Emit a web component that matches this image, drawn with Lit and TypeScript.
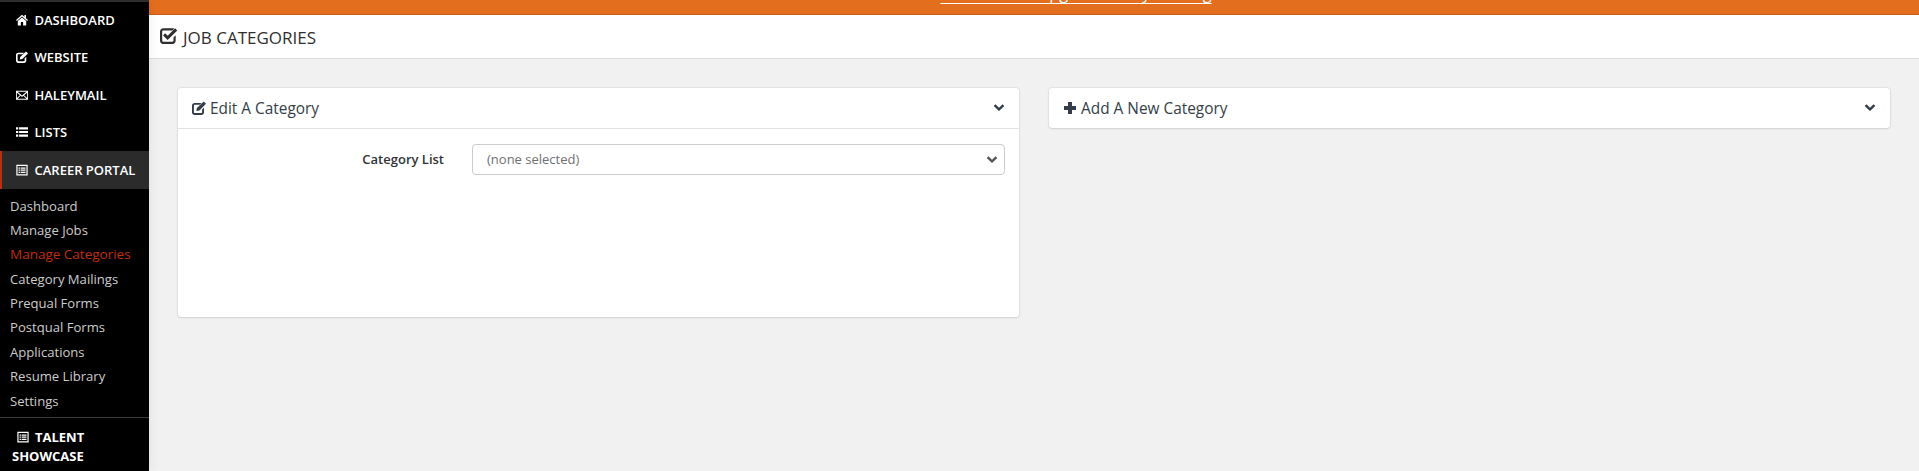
import { LitElement, html, css, svg } from "lit";
import { customElement } from "lit/decorators.js";

const icons: Record<string, unknown> = {
  home: svg`<path d="M7 .9 0 7l1 1.100L7 2.900l6 5.200L14 7l-2.400-2.100V1.300H9.800V3.300Z"/><path d="M7 4.100 2.100 8.300v5h3.600V9.400h2.600v3.900h3.600v-5Z"/>`,
  edit: svg`<path d="M2.600 1.900h7L7.700 3.800H3c-.6 0-1.100.5-1.100 1.100v6c0 .6.500 1.100 1.100 1.100h6c.6 0 1.100-.5 1.100-1.100V8.500L12 6.600v4.900c0 1.400-1.200 2.500-2.600 2.500H2.600C1.200 14 0 12.900 0 11.500V4.400C0 3 1.200 1.900 2.600 1.900Z"/><path d="M11.700.5 14 2.800 7.400 9.400 4.300 10l.6-3.100Z"/>`,
  mail: svg`<path fill-rule="evenodd" d="M0 2h14v10.500H0ZM1.800 3.100 7 7.500l5.200-4.400ZM1 4.300v6.200L4.600 7.300ZM13 4.300 9.400 7.300l3.600 3.200ZM5.400 8 1.900 11.400h10.200L8.600 8 7 9.300Z"/>`,
  list: svg`<path d="M0 1.500h2.600v2.600H0ZM3.600 1.500H14v2.600H3.600ZM0 5.700h2.600v2.600H0ZM3.600 5.700H14v2.600H3.600ZM0 9.900h2.600v2.600H0ZM3.600 9.900H14v2.600H3.600Z"/>`,
  listalt: svg`<path fill-rule="evenodd" d="M.4 1h13.200v12.400H.4ZM1.800 2.400v9.600h10.400V2.400Z"/><path d="M3 4h1.600v1.400H3ZM5.400 4h5.700v1.400H5.400ZM3 6.500h1.600v1.400H3ZM5.400 6.500h5.700v1.400H5.400ZM3 9h1.600v1.400H3ZM5.400 9h5.700v1.400H5.400Z"/>`,
  check: svg`<path d="M2.800 1h7.400c.5 0 1 .1 1.500.3l-1.600 1.600H2.800c-.6 0-1 .4-1 1v7.300c0 .6.500 1 1 1h7.300c.6 0 1-.5 1-1V8.600l1.800-1.800v4.400c0 1.600-1.300 2.900-2.800 2.900H2.800C1.200 14.100 0 12.800 0 11.200V3.800C0 2.300 1.200 1 2.800 1Z"/><path d="M6.300 10.800 2.500 7 4.300 5.200l2 2L12.400 1l1.800 1.800Z"/>`,
  plus: svg`<path d="M5 1h4v4h4v4H9v4H5V9H1V5h4Z"/>`,
  chev: svg`<path d="M.8 4.600 2.800 2.700 7 6.800l4.200-4.100 2 1.900L7 10.600Z"/>`,
};

const icon = (name: string, cls = "") =>
  html`<svg class="ic ${cls}" viewBox="0 0 14 14" fill="currentColor">${icons[name]}</svg>`;

@customElement("app-root")
export class AppRoot extends LitElement {
  static styles = css`
    :host {
      display: block;
      width: 1919px;
      height: 471px;
      overflow: hidden;
      font-family: "Open Sans", "Liberation Sans", sans-serif;
      background: #f1f1f1;
      color: #333;
    }
    .page { display: flex; height: 471px; }
    .ic { display: block; flex: none; width: 14px; height: 14px; }

    .side {
      flex: none;
      width: 149px;
      height: 471px;
      background: #000;
      border-top: 2px solid #2d2d2d;
      box-sizing: border-box;
      box-shadow: 2px 0 10px rgba(0, 0, 0, .06);
      position: relative;
      z-index: 1;
    }
    .nav {
      display: flex;
      align-items: center;
      gap: 6.500px;
      height: 37.5px;
      padding-left: 16px;
      box-sizing: border-box;
      color: #fff;
      font-size: 13px;
      font-weight: 600;
      white-space: nowrap;
    }
    .nav:first-child { height: 36.500px; }
    .nav .ic { width: 12px; height: 12px; }
    .nav.on {
      background: #2b2b2b;
      border-left: 2px solid #b8300d;
      padding-left: 14px;
    }
    .subs { padding: 5px 0 4px; border-bottom: 1px solid #3a3a3a; }
    .sub {
      height: 24.400px;
      line-height: 24.400px;
      padding-left: 10px;
      color: #ccc;
      font-size: 13.100px;
    }
    .sub.on { color: #c22c0a; font-size: 13.500px; }
    .talent {
      padding: 10px 20px 0 12px;
      color: #fff;
      font-size: 13px;
      line-height: 19px;
      font-weight: 700;
    }
    .talent .ic {
      display: inline-block;
      width: 12px;
      height: 12px;
      margin: 0 6px 0 5px;
      vertical-align: -1px;
    }

    .main { flex: 1; min-width: 0; }
    .banner {
      height: 14px;
      background: #e36e1e;
      border-bottom: 1px solid #c95c12;
      overflow: hidden;
      display: flex;
      justify-content: center;
      align-items: flex-end;
      padding-left: 84px;
    }
    .banner a {
      color: #fff;
      font-size: 16.400px;
      line-height: 19px;
      text-decoration: underline;
      text-decoration-thickness: 1px;
      text-underline-offset: 4px;
      white-space: nowrap;
      margin-bottom: 12px;
    }
    .title {
      background: #fff;
      border-bottom: 1px solid #dcdcdc;
      display: flex;
      align-items: center;
      gap: 6px;
      padding: 2px 0 0 11px;
      height: 41px;
      font-size: 17px;
      color: #2f2f2f;
    }
    .title .ic { width: 17px; height: 17px; margin-top: -5px; }

    .cards {
      display: grid;
      grid-template-columns: 1fr 1fr;
      gap: 30px;
      padding: 29px;
      align-items: start;
    }
    .card {
      background: #fff;
      border-radius: 3px;
      box-shadow: 0 0 2px rgba(0, 0, 0, .2), 0 1px 2px rgba(0, 0, 0, .08);
    }
    .head {
      height: 40px;
      display: flex;
      align-items: center;
      padding: 0 15px 0 14px;
      box-sizing: border-box;
      font-size: 15.400px;
      color: #333e48;
    }
    .head .name { flex: 1; }
    .head .lead { width: 14px; height: 14px; margin-right: 4px; }
    .head .ch { width: 12px; height: 12px; margin-right: -1px; }
    .body {
      height: 189px;
      border-top: 1px solid #e2e2e2;
      box-sizing: border-box;
      padding: 15px 14px;
    }
    .row { display: flex; align-items: center; height: 31px; }
    .row label {
      width: 252px;
      text-align: right;
      font-size: 13px;
      font-weight: 600;
      color: #333;
      margin: -1px 28px 0 0;
    }
    .select {
      flex: 1;
      height: 31px;
      box-sizing: border-box;
      border: 1px solid #ccc;
      border-radius: 4px;
      display: flex;
      align-items: center;
      padding: 0 5px 0 14px;
      font-size: 13px;
      color: #707070;
    }
    .select span { flex: 1; margin-top: -1px; }
    .select .ic { width: 12px; height: 12px; color: #555; margin-right: 1px; }
  `;

  render() {
    const navs = [
      ["home", "DASHBOARD"],
      ["edit", "WEBSITE"],
      ["mail", "HALEYMAIL"],
      ["list", "LISTS"],
    ];
    const subs = [
      "Dashboard",
      "Manage Jobs",
      "Manage Categories",
      "Category Mailings",
      "Prequal Forms",
      "Postqual Forms",
      "Applications",
      "Resume Library",
      "Settings",
    ];
    return html`
      <div class="page">
        <aside class="side">
          ${navs.map(([i, t]) => html`<div class="nav">${icon(i)}<span>${t}</span></div>`)}
          <div class="nav on">${icon("listalt")}<span>CAREER PORTAL</span></div>
          <div class="subs">
            ${subs.map((s) => html`<div class="sub ${s === "Manage Categories" ? "on" : ""}">${s}</div>`)}
          </div>
          <div class="talent">${icon("listalt")}TALENT SHOWCASE</div>
        </aside>
        <div class="main">
          <div class="banner"><a>Click here to upgrade today's billing</a></div>
          <div class="title">${icon("check")}<span>JOB CATEGORIES</span></div>
          <div class="cards">
            <section class="card">
              <div class="head">${icon("edit", "lead")}<span class="name">Edit A Category</span>${icon("chev", "ch")}</div>
              <div class="body">
                <div class="row">
                  <label>Category List</label>
                  <div class="select"><span>(none selected)</span>${icon("chev", "ch2")}</div>
                </div>
              </div>
            </section>
            <section class="card">
              <div class="head">${icon("plus", "lead")}<span class="name">Add A New Category</span>${icon("chev", "ch")}</div>
            </section>
          </div>
        </div>
      </div>
    `;
  }
}
